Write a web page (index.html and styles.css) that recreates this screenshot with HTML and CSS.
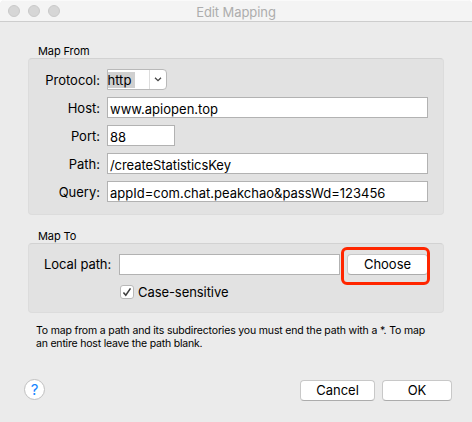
FILE: index.html
```html
<!DOCTYPE html>
<html lang="en">
<head>
<meta charset="utf-8">
<title>Edit Mapping</title>
<link rel="stylesheet" href="styles.css">
</head>
<body>
<div class="window">
  <header class="titlebar">
    <div class="lights"><i></i><i></i><i></i></div>
    <span class="title">Edit Mapping</span>
  </header>
  <main class="content">
    <h2 class="legend">Map From</h2>
    <section class="group from">
      <span class="label">Protocol:</span>
      <div class="combo"><span class="selected">http</span><span class="arrow"><svg width="8" height="5" viewBox="0 0 8 5"><path d="M1 .8 4 3.7 7 .8" fill="none" stroke="#444" stroke-width="1.3"/></svg></span></div>
      <span class="label">Host:</span>
      <div class="field"><span class="host">www.apiopen.top</span></div>
      <span class="label">Port:</span>
      <div class="field port">88</div>
      <span class="label">Path:</span>
      <div class="field"><span class="path">/createStatisticsKey</span></div>
      <span class="label">Query:</span>
      <div class="field"><span class="query">appId=com.chat.peakchao&amp;passWd=123456</span></div>
    </section>
    <h2 class="legend to-legend">Map To</h2>
    <section class="group to">
      <div class="local">
        <span class="label">Local path:</span>
        <div class="field"></div>
        <div class="choose-wrap"><div class="button choose">Choose</div><div class="highlight"></div></div>
      </div>
      <div class="check">
        <span class="box"><svg width="12" height="12" viewBox="0 0 12 12"><path d="M2.4 6.4 4.8 9.2 9.5 2.4" fill="none" stroke="#404040" stroke-width="1.6"/></svg></span>
        <span class="check-text">Case-sensitive</span>
      </div>
    </section>
    <p class="note"><span class="line-one">To map from a path and its subdirectories you must end the path with a *. To map</span><br><span class="line-two">an entire host leave the path blank.</span></p>
  </main>
  <footer class="footer">
    <div class="help">?</div>
    <div class="button cancel">Cancel</div>
    <div class="button ok">OK</div>
  </footer>
</div>
</body>
</html>
```
FILE: styles.css
```css
* { box-sizing: border-box; }
body { margin: 0; background: #fff; font: 13px/16px Inter, "Liberation Sans", sans-serif; color: #000; }
.window { width: 472px; height: 422px; background: #ebebeb; border-radius: 5px 5px 0 0; overflow: hidden; display: flex; flex-direction: column; }
.titlebar { height: 22px; flex: none; background: #f4f4f4; border-bottom: 1px solid #cdcdcd; display: grid; grid-template-columns: 60px 352px 60px; align-items: center; border-top: 1px solid #fafafa; }
.lights { display: flex; gap: 8px; padding-left: 8px; }
.lights i { width: 12px; height: 12px; flex: none; border-radius: 50%; background: #d6d6d6; border: 1px solid #c9c9c9; }
.title { text-align: center; color: #adadad; letter-spacing: -.08px; position: relative; top: 1px; }
.content { padding: 21px 28px 0; flex: 1; }
.legend { margin: 0; padding-left: 10px; height: 15px; font-size: 11px; line-height: 17px; font-weight: 400; letter-spacing: -.1px; }
.to-legend { margin-top: 13px; }
.group { width: 416px; background: #e2e2e2; border: 1px solid #dcdcdc; border-top-color: #d2d2d2; border-radius: 4px; }
.from { height: 157px; padding: 10px 15px 0 0; display: grid; grid-template-columns: 71px 1fr; column-gap: 7px; row-gap: 7px; grid-auto-rows: 21px; }
.label { text-align: right; line-height: 22px; white-space: nowrap; }
.field { height: 21px; background: #fff; border: 1px solid #b2b2b2; padding-left: 2px; line-height: 23px; white-space: nowrap; }
.port { width: 68px; line-height: 22px; }
.host { letter-spacing: .02px; }
.path { letter-spacing: -.07px; }
.combo { width: 60px; height: 21px; background: #fff; border: 1px solid #b9b9b9; border-radius: 0 4px 4px 0; display: flex; }
.selected { width: 27px; height: 16px; margin-top: 2px; background: #d0d0d0; line-height: 17px; text-indent: -.5px; }
.arrow { margin-left: auto; width: 17px; border-left: 1px solid #ddd; display: grid; place-items: center; }
.to { height: 70px; padding: 10px 15px 0; }
.local { display: grid; grid-template-columns: 68px 221px 81px; column-gap: 7px; }
.local .label { text-align: left; line-height: 21px; letter-spacing: -.07px; }
.button { height: 21px; background: #fff; border: 1px solid #c8c8c8; border-bottom-color: #acacac; border-radius: 4px; text-align: center; line-height: 19px; }
.choose-wrap { position: relative; }
.choose { line-height: 18px; }
.highlight { position: absolute; left: -6px; top: -7px; width: 89px; height: 38px; border: 3px solid #ff2600; border-radius: 6px; }
.check { display: flex; align-items: center; gap: 4px; margin: 9px 0 0 76px; height: 15px; }
.check-text { letter-spacing: -.07px; }
.box { width: 14px; height: 14px; background: #fff; border: 1px solid #b8b8b8; border-radius: 3px; display: grid; place-items: center; }
.note { margin: 11px 0 0 8px; font-size: 10.5px; line-height: 13px; white-space: nowrap; }
.line-one { letter-spacing: -.17px; }
.line-two { letter-spacing: -.2px; }
.footer { height: 42px; padding: 0 20px 0 24px; display: flex; gap: 7px; }
.help { width: 21px; height: 21px; margin: -1px auto 0 0; border-radius: 50%; background: #fff; border: 1px solid #c0c0c0; color: #1485ff; font-size: 15px; line-height: 19px; text-align: center; }
.cancel { width: 75px; }
.ok { width: 70px; }
```
